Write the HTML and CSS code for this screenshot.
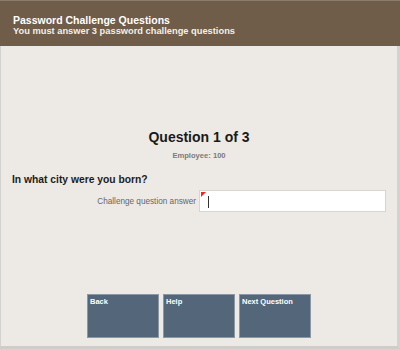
FILE: index.html
```html
<!DOCTYPE html>
<html>
<head>
<meta charset="utf-8">
<link rel="stylesheet" href="styles.css">
</head>
<body>
<div class="frame">
  <header class="header">
    <div class="title">Password Challenge Questions</div>
    <div class="subtitle">You must answer 3 password challenge questions</div>
  </header>
  <main class="main">
    <h1 class="qtitle">Question 1 of 3</h1>
    <div class="employee">Employee: 100</div>
    <div class="question">In what city were you born?</div>
    <div class="answer-row">
      <label class="answer-label">Challenge question answer</label>
      <div class="input"><span class="req"></span><span class="caret"></span></div>
    </div>
  </main>
  <footer class="buttons">
    <div class="btn">Back</div>
    <div class="btn">Help</div>
    <div class="btn">Next Question</div>
  </footer>
</div>
</body>
</html>
```
FILE: styles.css
```css
html, body {
  margin: 0;
  padding: 0;
  background: #ffffff;
}
body {
  font-family: "Liberation Sans", Arial, sans-serif;
}
.frame {
  width: 400px;
  height: 349px;
  box-sizing: border-box;
  display: flex;
  flex-direction: column;
  background: #edeae5;
  border-left: 1px solid #d4d2cf;
  border-right: 3px solid #d4d2cf;
  border-bottom: 3px solid #cfcdca;
}
.header {
  height: 46px;
  box-sizing: border-box;
  background: #6f5c49;
  border-top: 1px solid #8a7b6c;
  margin: 0 -3px 0 -1px;
  padding: 13px 0 0 13px;
  color: #ffffff;
  font-weight: bold;
}
.title {
  font-size: 10.5px;
  line-height: 12px;
}
.subtitle {
  font-size: 9.3px;
  line-height: 11px;
  color: #f4efe8;
}
.main {
  flex: 1;
  display: flex;
  flex-direction: column;
  padding: 82px 11px 0 11px;
}
.qtitle {
  margin: 0;
  font-size: 14px;
  line-height: 18px;
  text-align: center;
  color: #1a1a1a;
}
.employee {
  margin-top: 5px;
  font-size: 7.6px;
  line-height: 10px;
  font-weight: bold;
  text-align: center;
  color: #7a7a7a;
}
.question {
  margin-top: 12px;
  font-size: 10.3px;
  line-height: 13px;
  font-weight: bold;
  color: #1c1c1c;
}
.answer-row {
  margin-top: 4px;
  display: flex;
  align-items: center;
  gap: 3px;
}
.answer-label {
  width: 185px;
  text-align: right;
  font-size: 8.2px;
  color: #666666;
}
.input {
  position: relative;
  width: 188px;
  height: 22px;
  box-sizing: border-box;
  background: #ffffff;
  border: 1px solid #d8d6d2;
}
.req {
  position: absolute;
  left: 1px;
  top: 1px;
  width: 0;
  height: 0;
  border-top: 5px solid #ff2020;
  border-right: 5px solid transparent;
}
.caret {
  position: absolute;
  left: 8px;
  top: 5px;
  width: 1px;
  height: 12px;
  background: #333333;
}
.buttons {
  display: flex;
  justify-content: center;
  gap: 4px;
  padding: 0 0 8px 0;
}
.btn {
  width: 72px;
  height: 44px;
  box-sizing: border-box;
  background: #546679;
  border: 1px solid #8b97a4;
  color: #ffffff;
  font-weight: bold;
  font-size: 7.5px;
  line-height: 9px;
  padding: 2px 2px;
}
```
